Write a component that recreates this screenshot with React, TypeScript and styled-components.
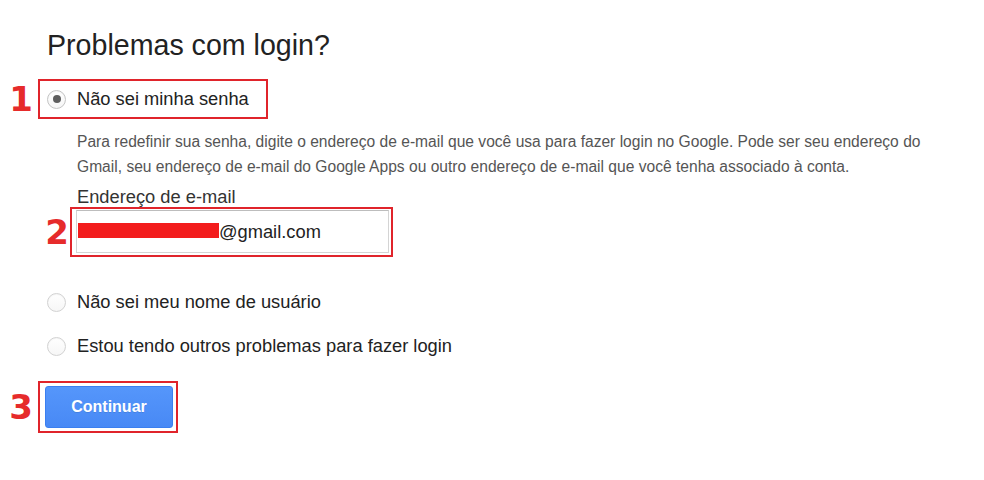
import React from "react";
import styled, { createGlobalStyle } from "styled-components";

const Global = createGlobalStyle`
  html, body { margin: 0; padding: 0; background: #ffffff; }
  body { font-family: "Liberation Sans", Arial, Helvetica, sans-serif; }
`;

const Page = styled.div`
  width: 984px;
  height: 480px;
  box-sizing: border-box;
  padding-top: 28px;
  background: #fff;
  display: flex;
  flex-direction: column;
  align-items: flex-start;
`;

const Title = styled.h1`
  margin: 0 0 0 47px;
  font-size: 28.6px;
  line-height: 34px;
  font-weight: 400;
  color: #222;
`;

const Annotated = styled.div<{ $indent: number; $gap: number; $top: number }>`
  display: flex;
  align-items: center;
  margin-left: ${(p) => p.$indent}px;
  margin-top: ${(p) => p.$top}px;
  gap: ${(p) => p.$gap}px;
`;

const Marker = styled.span`
  width: 26px;
  text-align: right;
  font-family: "DejaVu Sans", sans-serif;
  font-weight: 700;
  font-size: 34px;
  line-height: 34px;
  color: #e62b2b;
`;

const RedBox = styled.div<{ $pad: string }>`
  border: 2px solid #e0242b;
  padding: ${(p) => p.$pad};
  display: flex;
  align-items: center;
`;

const Option = styled.label<{ $height: number }>`
  display: flex;
  align-items: center;
  height: ${(p) => p.$height}px;
  font-size: 18.3px;
  line-height: ${(p) => p.$height}px;
  color: #222;
`;

const OptionRow = styled(Option)<{ $top: number }>`
  margin-left: 47px;
  margin-top: ${(p) => p.$top}px;
`;

const Radio = styled.span<{ $checked?: boolean }>`
  position: relative;
  width: 19px;
  height: 19px;
  box-sizing: border-box;
  border-radius: 50%;
  border: 1px solid ${(p) => (p.$checked ? "#c4c4c4" : "#d2d2d2")};
  background: linear-gradient(#ffffff, #f6f6f6);
  box-shadow: inset 0 1px 1px rgba(0, 0, 0, 0.04);
  margin-right: 11px;
  flex: none;
  &::after {
    content: "";
    display: ${(p) => (p.$checked ? "block" : "none")};
    position: absolute;
    left: 50%;
    top: 50%;
    width: 8px;
    height: 8px;
    margin: -4px 0 0 -4px;
    border-radius: 50%;
    background: #5e5e5e;
  }
`;

const Description = styled.p`
  margin: 10px 0 0 77px;
  width: 860px;
  font-size: 15.6px;
  line-height: 25px;
  color: #555;
`;

const FieldLabel = styled.div`
  margin: 7px 0 0 77px;
  font-size: 18.3px;
  line-height: 21px;
  color: #333;
`;

const FakeInput = styled.div`
  width: 313px;
  height: 43px;
  box-sizing: border-box;
  border: 1px solid #d4d4d4;
  border-top-color: #bdbdbd;
  padding-left: 1px;
  display: flex;
  align-items: center;
  font-size: 18.3px;
  color: #222;
  background: #fff;
`;

const Redaction = styled.span`
  display: inline-block;
  width: 141px;
  height: 15px;
  margin-top: -2px;
  background: #f31c1d;
`;

const Button = styled.button`
  width: 128px;
  height: 42px;
  border: 1px solid #3b7ff0;
  border-radius: 3px;
  background: linear-gradient(#5596fb, #4889f5);
  color: #fff;
  font-family: "Liberation Sans", Arial, sans-serif;
  font-weight: 700;
  font-size: 16px;
  text-shadow: 0 1px 0 rgba(0, 0, 0, 0.1);
  padding: 0;
  cursor: pointer;
`;

export default function App() {
  return (
    <>
      <Global />
      <Page>
        <Title>Problemas com login?</Title>

        <Annotated $indent={7} $gap={5} $top={17}>
          <Marker>1</Marker>
          <RedBox $pad="0 17px 0 7px">
            <Option $height={36}>
              <Radio $checked />
              Não sei minha senha
            </Option>
          </RedBox>
        </Annotated>

        <Description>
          Para redefinir sua senha, digite o endereço de e-mail que você usa para fazer login no Google. Pode ser seu endereço do
          Gmail, seu endereço de e-mail do Google Apps ou outro endereço de e-mail que você tenha associado à conta.
        </Description>

        <FieldLabel>Endereço de e-mail</FieldLabel>

        <Annotated $indent={43} $gap={1} $top={0}>
          <Marker>2</Marker>
          <RedBox $pad="1px 2px 2px 4px">
            <FakeInput>
              <Redaction />@gmail.com
            </FakeInput>
          </RedBox>
        </Annotated>

        <OptionRow $height={30} $top={30}>
          <Radio />
          Não sei meu nome de usuário
        </OptionRow>

        <OptionRow $height={30} $top={14}>
          <Radio />
          Estou tendo outros problemas para fazer login
        </OptionRow>

        <Annotated $indent={7} $gap={5} $top={20}>
          <Marker>3</Marker>
          <RedBox $pad="3px 3px 3px 5px">
            <Button>Continuar</Button>
          </RedBox>
        </Annotated>
      </Page>
    </>
  );
}
